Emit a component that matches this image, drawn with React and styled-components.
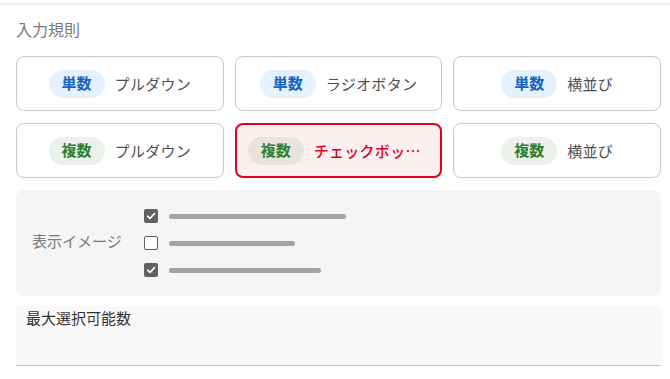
import React from "react";
import styled, { createGlobalStyle, css } from "styled-components";

const Global = createGlobalStyle`
  html, body { margin: 0; padding: 0; background: #ffffff; }
  body { font-family: Roboto, "Noto Sans CJK JP", "Noto Sans", sans-serif; }
  * { box-sizing: border-box; }
`;

const Page = styled.div`
  width: 670px;
  height: 379px;
  overflow: hidden;
  background: #fff;
`;

const TopRule = styled.div`
  margin-top: 3px;
  height: 2px;
  background: #f0f0f0;
`;

const Section = styled.section`
  padding: 0 9px 0 16px;
  display: flex;
  flex-direction: column;
`;

const Title = styled.div`
  margin-top: 14px;
  height: 24px;
  line-height: 24px;
  font-size: 16px;
  color: #7a7a7a;
`;

const Grid = styled.div`
  margin-top: 13px;
  display: grid;
  grid-template-columns: repeat(3, 1fr);
  column-gap: 11px;
  row-gap: 12px;
`;

const Card = styled.div`
  height: 55px;
  border: 1px solid #c8c8c8;
  border-radius: 8px;
  background: #fff;
  display: flex;
  align-items: center;
  justify-content: center;
  gap: 10px;
  padding: 0 12px;
  min-width: 0;
  ${(p) =>
    p.$selected &&
    css`
      border: 2px solid #e2001a;
      background: #fdf0f1;
      padding: 0 11px;
    `}
`;

const Chip = styled.span`
  flex-shrink: 0;
  height: 28px;
  line-height: 28px;
  padding: 0 13px;
  border-radius: 14px;
  font-size: 15px;
  font-weight: 700;
  color: ${(p) => (p.$multi ? "#2e7d32" : "#1565c0")};
  background: ${(p) =>
    p.$multi ? "rgba(46, 125, 50, 0.1)" : "rgba(33, 150, 243, 0.12)"};
`;

const Label = styled.span`
  min-width: 0;
  overflow: hidden;
  text-overflow: ellipsis;
  white-space: nowrap;
  font-family: "Noto Sans CJK JP", sans-serif;
  font-size: 15px;
  color: ${(p) => (p.$selected ? "#e2001a" : "#4f4f4f")};
  font-weight: ${(p) => (p.$selected ? 500 : 400)};
  letter-spacing: 0.3px;
`;

const Preview = styled.div`
  margin-top: 12px;
  height: 106px;
  background: #f5f5f5;
  border-radius: 8px;
  display: flex;
  align-items: center;
  padding-left: 16px;
`;

const PreviewLabel = styled.div`
  width: 112px;
  font-size: 15px;
  line-height: 20px;
  margin-bottom: 3px;
  color: #7a7a7a;
`;

const List = styled.div`
  display: flex;
  flex-direction: column;
  gap: 13px;
`;

const Row = styled.div`
  display: flex;
  align-items: center;
  gap: 11px;
  height: 14px;
`;

const Box = styled.span`
  width: 14px;
  height: 14px;
  border-radius: 2px;
  display: flex;
  align-items: center;
  justify-content: center;
  ${(p) =>
    p.$checked
      ? css`
          background: #616161;
        `
      : css`
          border: 1.5px solid #616161;
          background: #fff;
        `}
`;

const Bar = styled.span`
  height: 5px;
  border-radius: 3px;
  background: #a3a3a3;
`;

const Field = styled.div`
  margin-top: 10px;
  height: 60px;
  background: #f9f9f9;
  border-radius: 4px 4px 0 0;
  border-bottom: 1.5px solid #c4c4c4;
  padding: 0 10px;
  font-size: 15px;
  line-height: 26px;
  color: #333;
`;

const Check = () => (
  <svg width="10" height="10" viewBox="0 0 10 10">
    <path d="M1.6 5.2 L4 7.4 L8.5 2.6" fill="none" stroke="#fff" strokeWidth="1.6" strokeLinecap="round" strokeLinejoin="round" />
  </svg>
);

const options = [
  { multi: false, label: "プルダウン" },
  { multi: false, label: "ラジオボタン" },
  { multi: false, label: "横並び" },
  { multi: true, label: "プルダウン" },
  { multi: true, label: "チェックボックス", selected: true },
  { multi: true, label: "横並び" },
];

const rows = [
  { checked: true, w: 177 },
  { checked: false, w: 126 },
  { checked: true, w: 152 },
];

export default function App() {
  return (
    <Page>
      <Global />
      <TopRule />
      <Section>
        <Title>入力規則</Title>
        <Grid>
          {options.map((o, i) => (
            <Card key={i} $selected={o.selected}>
              <Chip $multi={o.multi}>{o.multi ? "複数" : "単数"}</Chip>
              <Label $selected={o.selected}>{o.label}</Label>
            </Card>
          ))}
        </Grid>
        <Preview>
          <PreviewLabel>表示イメージ</PreviewLabel>
          <List>
            {rows.map((r, i) => (
              <Row key={i}>
                <Box $checked={r.checked}>{r.checked && <Check />}</Box>
                <Bar style={{ width: r.w }} />
              </Row>
            ))}
          </List>
        </Preview>
        <Field>最大選択可能数</Field>
      </Section>
    </Page>
  );
}
